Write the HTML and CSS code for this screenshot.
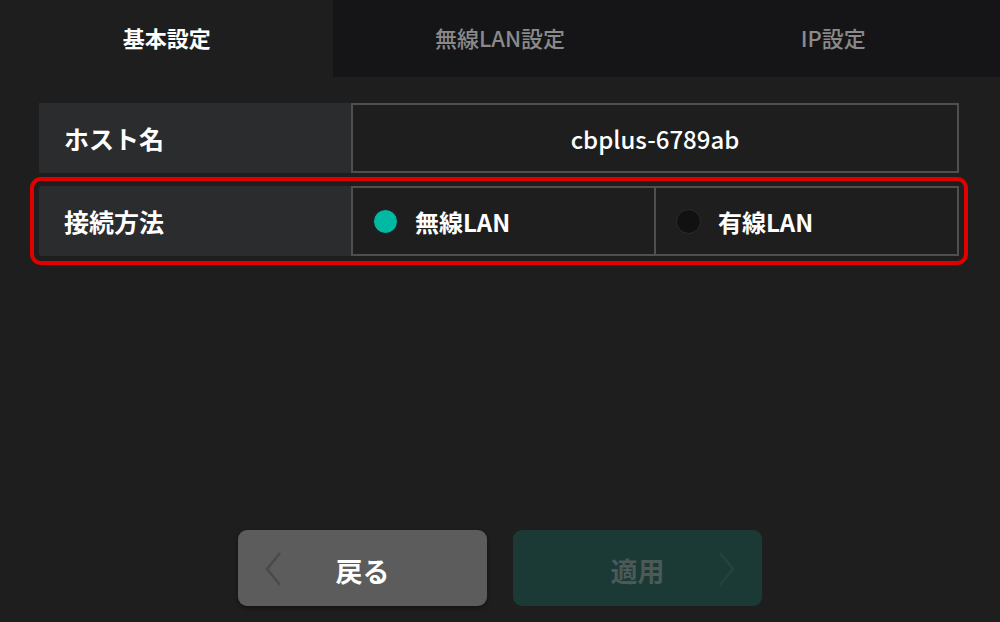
FILE: index.html
```html
<!DOCTYPE html>
<html lang="ja">
<head>
<meta charset="utf-8">
<link rel="stylesheet" href="styles.css">
</head>
<body>
<div class="screen">
  <nav class="tabs">
    <div class="tab active">基本設定</div>
    <div class="tab">無線LAN設定</div>
    <div class="tab">IP設定</div>
  </nav>
  <main class="content">
    <div class="row">
      <div class="label">ホスト名</div>
      <div class="value">cbplus-6789ab</div>
    </div>
    <div class="row highlighted">
      <div class="label">接続方法</div>
      <div class="options">
        <div class="option"><span class="radio on"></span><span>無線LAN</span></div>
        <div class="option"><span class="radio"></span><span>有線LAN</span></div>
      </div>
    </div>
  </main>
  <footer class="actions">
    <button class="btn back">
      <svg class="chev left" width="18" height="36" viewBox="0 0 18 36"><path d="M16 2 L3 18 L16 34" fill="none" stroke="#4a4a4a" stroke-width="2.5"/></svg>
      <span>戻る</span>
    </button>
    <button class="btn apply">
      <span>適用</span>
      <svg class="chev right" width="18" height="36" viewBox="0 0 18 36"><path d="M2 2 L15 18 L2 34" fill="none" stroke="#22433f" stroke-width="2.5"/></svg>
    </button>
  </footer>
</div>
</body>
</html>
```
FILE: styles.css
```css
* { box-sizing: border-box; }
html, body { margin: 0; padding: 0; }
body {
  background: #1e1e1e;
  font-family: "Noto Sans CJK JP", "Noto Sans", sans-serif;
  color: #fff;
}
.screen {
  width: 1000px;
  height: 622px;
  display: flex;
  flex-direction: column;
  overflow: hidden;
}
.tabs {
  display: flex;
  height: 77px;
}
.tab {
  flex: 1;
  display: flex;
  align-items: center;
  justify-content: center;
  background: #151517;
  color: #8a8a8a;
  font-size: 22px;
  font-weight: 500;
  padding-bottom: 4px;
}
.tab.active {
  background: #1e1e1e;
  color: #ffffff;
  font-weight: 700;
}
.content {
  padding: 26px 41px 0 39px;
  display: flex;
  flex-direction: column;
  gap: 13px;
}
.row {
  display: flex;
  height: 70px;
  background: #2b2c2e;
}
.row.highlighted {
  outline: 4px solid #e00000;
  outline-offset: 5px;
  border-radius: 2px;
}
.label {
  width: 312px;
  display: flex;
  align-items: center;
  padding-left: 25px;
  font-size: 25px;
  font-weight: 700;
}
.value {
  flex: 1;
  display: flex;
  align-items: center;
  justify-content: center;
  background: #1e1e1e;
  border: 2px solid #4f4f4f;
  font-size: 24px;
  font-weight: 500;
}
.options {
  flex: 1;
  display: flex;
}
.option {
  flex: 1;
  display: flex;
  align-items: center;
  gap: 17px;
  padding-left: 20px;
  background: #1e1e1e;
  border: 2px solid #4f4f4f;
  font-size: 24px;
  font-weight: 700;
}
.option + .option { border-left: none; }
.radio {
  width: 25px;
  height: 25px;
  border-radius: 50%;
  background: #111112;
  border: 1px solid #2c2c2c;
}
.radio.on {
  background: #00b9a2;
  border-color: #1a1a1a;
}
.actions {
  margin-top: auto;
  display: flex;
  justify-content: center;
  gap: 26px;
  padding: 0 0 16px 0;
}
.btn {
  width: 249px;
  height: 76px;
  border: none;
  border-radius: 9px;
  display: flex;
  align-items: center;
  justify-content: center;
  position: relative;
  font-family: "Noto Sans CJK JP", "Noto Sans", sans-serif;
  font-size: 27px;
  font-weight: 700;
  padding-top: 5px;
}
.btn.back {
  background: #5c5c5c;
  color: #fff;
  box-shadow: 0 2px 4px rgba(0,0,0,0.4);
}
.btn.apply {
  background: #1b3a36;
  color: #4b5957;
}
.chev {
  position: absolute;
  top: 21px;
}
.chev.left { left: 26px; }
.chev.right { right: 26px; }
```
